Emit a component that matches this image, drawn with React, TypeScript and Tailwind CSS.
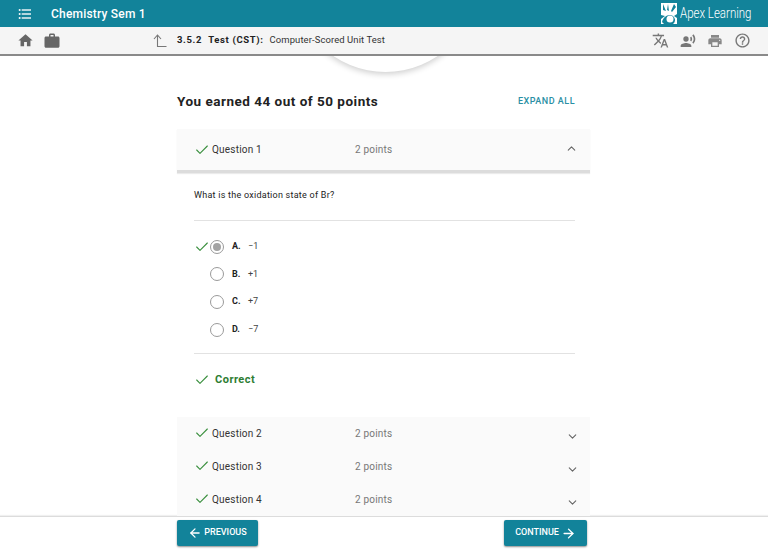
import { ArrowLeft, ArrowRight, Check, ChevronDown, ChevronUp } from "lucide-react";
import {
  MdFormatListBulleted,
  MdHelpOutline,
  MdHome,
  MdPrint,
  MdRecordVoiceOver,
  MdTranslate,
  MdWork,
} from "react-icons/md";

const options = [
  { letter: "A.", text: "−1", selected: true },
  { letter: "B.", text: "+1", selected: false },
  { letter: "C.", text: "+7", selected: false },
  { letter: "D.", text: "−7", selected: false },
];

const Logo = () => (
  <svg width="16" height="21" viewBox="0 0 16 21" className="shrink-0">
    <rect width="16" height="21" fill="#fff" />
    <path d="M2 1l3 7-3-1zM7 1l1 7-2-1zM13 1l-3 7 1 1 4-5z" fill="#12839a" />
    <path d="M0 12l4 1-4 3zM16 11l-3 2 3 2z" fill="#12839a" />
    <path d="M1 19c1-4 4-7 8-7 3 0 5 3 5 5 0 2-1 3-2 4H3z" fill="#12839a" />
    <circle cx="9" cy="16" r="3.5" fill="#fff" />
  </svg>
);

const QuestionRow = ({ name, className }: { name: string; className: string }) => (
  <div className={`flex items-center bg-[#fafafa] pl-[17px] pr-[11px] ${className}`}>
    <Check size={16} strokeWidth={1.6} className="text-[#388e3c] -translate-y-px" />
    <span className="ml-[2px] w-[143px] text-[10px] tracking-[0.2px] text-[#333]">{name}</span>
    <span className="flex-1 text-[10px] tracking-[0.2px] text-[#777]">2 points</span>
    <ChevronDown size={13} strokeWidth={2} className="translate-y-[3px] text-[#666]" />
  </div>
);

const App = () => {
  return (
    <div className="flex h-[549px] w-[768px] flex-col overflow-hidden bg-white font-['Roboto',sans-serif]">
      <header className="flex h-[27px] shrink-0 items-center justify-between bg-[#12839a] pl-[17px] pr-[17px] text-white">
        <div className="flex items-center">
          <MdFormatListBulleted size={16} className="opacity-90" />
          <span className="ml-[18px] text-[12px] font-medium tracking-[0.2px]">Chemistry Sem 1</span>
        </div>
        <div className="flex items-center gap-[3px]">
          <Logo />
          <span className="w-[71px] origin-left scale-x-[0.82] whitespace-nowrap text-[14px] font-light">Apex Learning</span>
        </div>
      </header>

      <div className="flex h-[29px] shrink-0 items-center border-b-2 border-[#8a8a8a] bg-[#f5f5f5] pl-[17px] pr-[17px]">
        <MdHome size={17} className="text-[#666]" />
        <MdWork size={18} className="ml-[9px] text-[#666]" />
        <svg width="14" height="14" viewBox="0 0 14 14" className="ml-[92px] text-[#777]" fill="none" stroke="currentColor" strokeWidth="1.1">
          <path d="M1 5l3.5-4L8 5M4.5 1v11.5H13.5" />
        </svg>
        <span className="ml-[10px] text-[9.5px] font-bold tracking-[0.65px] text-[#222]">3.5.2</span>
        <span className="ml-[6px] text-[9.5px] font-bold tracking-[0.65px] text-[#222]">Test (CST):</span>
        <span className="ml-[6px] text-[9.45px] tracking-[0.1px] text-[#333]">Computer-Scored Unit Test</span>
        <div className="ml-auto flex items-center gap-[11px] text-[#777]">
          <MdTranslate size={17} />
          <MdRecordVoiceOver size={16} />
          <MdPrint size={16} className="text-[#888]" />
          <MdHelpOutline size={17} />
        </div>
      </div>

      <main className="relative min-h-0 flex-1 overflow-hidden">
        <div className="absolute left-[293px] top-[-169px] h-[185px] w-[185px] rounded-full bg-white shadow-[0_2px_6px_rgba(0,0,0,0.2)]" />

        <div className="relative ml-[177px] w-[413px]">
          <div className="flex h-[73px] items-center justify-between pr-[15px] pt-[18px]">
            <h1 className="text-[13.5px] font-bold tracking-[0.5px] text-[#222]">You earned 44 out of 50 points</h1>
            <span className="text-[9px] font-medium tracking-[0.5px] text-[#2a8fa4]">EXPAND ALL</span>
          </div>

          <div className="flex h-[44px] items-center border-b-[3px] border-[#dcdcdc] bg-[#fafafa] pl-[17px] pr-[12px] shadow-[0_1px_1px_rgba(0,0,0,0.08)]">
            <Check size={16} strokeWidth={1.6} className="text-[#388e3c]" />
            <span className="ml-[2px] w-[143px] text-[10px] tracking-[0.2px] text-[#333]">Question 1</span>
            <span className="flex-1 text-[10px] tracking-[0.2px] text-[#777]">2 points</span>
            <ChevronUp size={13} strokeWidth={2} className="-translate-y-px text-[#666]" />
          </div>

          <div className="mr-[15px] ml-[17px]">
            <p className="flex h-[48px] items-center border-b border-[#e2e2e2] pb-[1px] text-[9px] tracking-[0.25px] text-[#222]">
              What is the oxidation state of Br?
            </p>
            <ul className="border-b border-[#e2e2e2] pt-[12px] pb-[10px]">
              {options.map((o) => (
                <li key={o.letter} className="flex h-[27.6px] items-center">
                  <span className="flex w-[16px] justify-start">
                    {o.selected && <Check size={16} strokeWidth={1.6} className="text-[#388e3c]" />}
                  </span>
                  <span className="flex h-[14px] w-[14px] items-center justify-center rounded-full border-[1.5px] border-[#9a9a9a]">
                    {o.selected && <span className="h-[8px] w-[8px] rounded-full bg-[#a3a3a3]" />}
                  </span>
                  <span className="ml-[8px] w-[16px] text-[9px] font-bold text-[#222]">{o.letter}</span>
                  <span className="text-[9px] text-[#444]">{o.text}</span>
                </li>
              ))}
            </ul>
            <div className="flex h-[52px] items-center">
              <Check size={16} strokeWidth={1.6} className="text-[#388e3c]" />
              <span className="ml-[5px] text-[11px] font-bold tracking-[0.5px] text-[#2e7d32]">Correct</span>
            </div>
          </div>

          <div className="mt-[11px]">
            <QuestionRow name="Question 2" className="h-[33px]" />
            <QuestionRow name="Question 3" className="h-[33px]" />
            <QuestionRow name="Question 4" className="h-[33px]" />
          </div>
        </div>
      </main>

      <footer className="flex h-[33px] shrink-0 items-start justify-between border-t border-[#dcdcdc] pt-[3px] pr-[181px] pl-[177px] shadow-[0_-1px_1px_rgba(0,0,0,0.06)]">
        <button className="flex h-[26px] w-[81px] items-center justify-center gap-[2px] rounded-[2px] bg-[#12839a] text-[9px] font-medium text-white shadow-[0_1px_2px_rgba(0,0,0,0.45)]">
          <ArrowLeft size={14} strokeWidth={2.2} />
          PREVIOUS
        </button>
        <button className="flex h-[26px] w-[83px] items-center justify-center gap-[2px] rounded-[2px] bg-[#12839a] text-[9px] font-medium text-white shadow-[0_1px_2px_rgba(0,0,0,0.45)]">
          CONTINUE
          <ArrowRight size={15} strokeWidth={2.2} />
        </button>
      </footer>
    </div>
  );
};

export default App;
